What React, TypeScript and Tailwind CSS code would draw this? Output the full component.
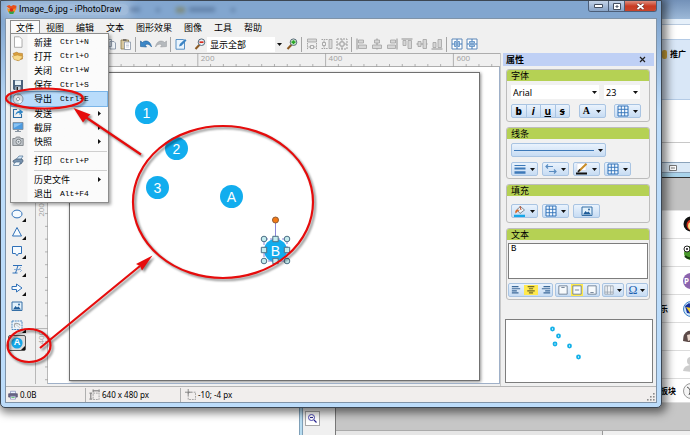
import React from "react";
import type { ReactNode } from "react";

/* ---------- small drawing helpers ---------- */

function Icon({ children, size = 12 }: { children: ReactNode; size?: number }) {
  return (
    <svg width={size} height={size} viewBox="0 0 12 12" fill="none" aria-hidden="true" className="shrink-0">
      {children}
    </svg>
  );
}

function Caret() {
  return (
    <svg width="5" height="3" viewBox="0 0 5 3" aria-hidden="true" className="pointer-events-none shrink-0">
      <path d="M0 0h5L2.500 3z" fill="#111" />
    </svg>
  );
}

const Logo = (
  <Icon size={11}>
    <path d="M.5 2.500 3.500 1l2 1.500L8 1l3.500 1L11 6 6.500 7z" fill="#e8501c" />
    <path d="M1 4.500 6 6l5-1.500L9.500 9h-7z" fill="#f7921e" />
    <path d="M3 8h6l-1 3H4z" fill="#35a045" />
    <circle cx="6" cy="6.500" r="2" fill="#d42a1a" />
  </Icon>
);

const icons = {
  newFile: <path d="M2.500.8h5l2.500 2.500v8h-7.500z" fill="#fff" stroke="#9a9a9a" strokeWidth=".8" />,
  open: (
    <>
      <path d="M1 3.500 5 2l1 1 4.500.5V9L5 10.500z" fill="#d99f3e" stroke="#a8701d" strokeWidth=".5" />
      <path d="M.5 6 5.500 5 11 6.500 7 10.800 2 9.500z" fill="#f7d98b" stroke="#b8842c" strokeWidth=".5" />
    </>
  ),
  save: (
    <>
      <path d="M1 1h10v10H2L1 10z" fill="#49617c" />
      <path d="M3 1.500h6V6H3z" fill="#e8f2f8" />
      <path d="M3.500 7.500h5V11h-5z" fill="#c8d4de" />
      <path d="M4.500 8h1.500v3H4.500z" fill="#222" />
    </>
  ),
  disc: (
    <>
      <circle cx="6" cy="6" r="5" fill="#d5dbe2" stroke="#76808c" strokeWidth=".8" />
      <path d="M6 6 2 3.500A5 5 0 0 1 5 1.500zM6 6l4 2.500A5 5 0 0 1 7 10.500z" fill="#f8fafc" />
      <circle cx="6" cy="6" r="1.600" fill="#fff" stroke="#76808c" strokeWidth=".7" />
    </>
  ),
  send: (
    <>
      <path d="M9.500 7v3.500h-8v-8H5" stroke="#2d6da3" strokeWidth="1.100" />
      <path d="M3.500 8.500c0-3 1.500-4.500 4-4.500V2l3.800 3-3.800 3V6c-2 0-3 .5-4 2.500z" fill="#2f87c8" />
    </>
  ),
  monitor: (
    <>
      <path d="M1 1.500h10v7H1z" fill="#4d9be0" stroke="#7c8a99" strokeWidth=".8" />
      <path d="M2 2.500h8L2 7z" fill="#8cc4f2" />
      <path d="M5 8.500h2V10h2v1H3v-1h2z" fill="#8a96a2" />
    </>
  ),
  camera: (
    <>
      <path d="M.8 3.500h2.500l1-1.500h3.500l1 1.500h2.400v7H.8z" fill="#bfc4c9" stroke="#73787d" strokeWidth=".8" />
      <circle cx="6.500" cy="6.800" r="2.500" fill="#eef1f3" stroke="#73787d" strokeWidth=".9" />
      <circle cx="6.500" cy="6.800" r="1" fill="#7d8890" />
    </>
  ),
  print: (
    <>
      <path d="M4 4.500 7 1h4L8.500 5z" fill="#d4e9fa" stroke="#4e7194" strokeWidth=".7" />
      <path d="M.8 6 4 4h6l1.200 2L9 9H3z" fill="#7892ae" stroke="#3f566e" strokeWidth=".7" />
      <path d="M2 8.500 4 7h4.500L7 10.500H1.500z" fill="#f2f7fb" stroke="#4e7194" strokeWidth=".7" />
    </>
  ),
  copy: <path d="M1.500 1.500h5v7h-5zM5 3.500h4L10.500 5v6H5z" fill="#eef3f8" stroke="#8793a5" strokeWidth=".9" />,
  paste: (
    <>
      <path d="M1 2h7.500v9H1z" fill="#d8c8a0" stroke="#8c7846" strokeWidth=".8" />
      <path d="M3 1h3.500v2H3z" fill="#77706a" />
      <path d="M4.500 4h6v7.500h-6z" fill="#fff" stroke="#8793a5" strokeWidth=".8" />
      <path d="M6 6h3M6 7.500h3M6 9h3" stroke="#a7b4c6" strokeWidth=".6" />
    </>
  ),
  undo: <path d="M.5 8.500V3l2 1.500C5 1.800 10.500 2.500 11.500 9 9.500 5.800 7 5.500 5 7l1.500 2z" fill="#3c87c7" stroke="#1f5d97" strokeWidth=".6" />,
  redo: <path d="M11.500 8.500V3l-2 1.500C7 1.800 1.500 2.500.5 9 2.500 5.800 5 5.500 7 7L5.500 9z" fill="#b5b9bd" stroke="#96999c" strokeWidth=".5" />,
  edit: (
    <>
      <path d="M1 1.500h7.500l1 1v8.700H1z" fill="#e9f4fd" stroke="#4a86bd" strokeWidth=".9" />
      <path d="m4 8.500.8-2.500L10 1l1.500 1.400L6.500 7.800z" fill="#3b84c4" />
    </>
  ),
  zoomOut: (
    <>
      <path d="M5.500 6.800 1.500 11" stroke="#8c5a23" strokeWidth="2" />
      <circle cx="7.500" cy="4.200" r="3.300" fill="#e8f1f7" stroke="#596b7a" />
      <path d="M5.500 4.200h4" stroke="#d92a1c" strokeWidth="1.700" />
    </>
  ),
  zoomIn: (
    <>
      <path d="M5.500 6.800 1.500 11" stroke="#8c5a23" strokeWidth="2" />
      <circle cx="7.500" cy="4.200" r="3.300" fill="#d9efd5" stroke="#596b7a" />
      <path d="M5.500 4.200h4M7.500 2.200v4" stroke="#25a526" strokeWidth="1.700" />
    </>
  ),
  sameWidth: (
    <>
      <path d="M1.500 1h9v3h-9z" fill="#dadada" stroke="#a2a2a2" strokeWidth=".8" />
      <path d="M1.500 5v6.500M10.500 5v6.500M2.500 9h1.500M8 9h1.500" stroke="#999" strokeWidth=".9" strokeDasharray="1.500 .8" />
      <path d="M4.500 7.500h3v3h-3z" stroke="#999" strokeWidth=".8" />
    </>
  ),
  sameHeight: (
    <>
      <path d="M8 1.500h3v9H8z" fill="#dadada" stroke="#a2a2a2" strokeWidth=".8" />
      <path d="M.5 1.500H7M.5 10.500H7M3 2.500V4M3 8v1.500" stroke="#999" strokeWidth=".9" strokeDasharray="1.500 .8" />
      <path d="M1.500 4.500h3v3h-3z" stroke="#999" strokeWidth=".8" />
    </>
  ),
  sameSize: (
    <>
      <path d="M1 1h10v10H1z" stroke="#999" strokeWidth="1" strokeDasharray="2 1" />
      <path d="M4 4h4v4H4zM6 1v3M6 8v3M1 6h3M8 6h3" stroke="#999" strokeWidth=".9" />
    </>
  ),
  alignL: (
    <>
      <path d="M1 .5v11" stroke="#8e8e8e" />
      <path d="M2.500 2h5v3h-5zM2.500 7h8v3.500h-8z" fill="#d6d6d6" stroke="#a2a2a2" strokeWidth=".8" />
    </>
  ),
  alignC: (
    <>
      <path d="M6 .5v11" stroke="#8e8e8e" />
      <path d="M3.500 2h5v3h-5zM1.500 7h9v3.500h-9z" fill="#d6d6d6" stroke="#a2a2a2" strokeWidth=".8" />
    </>
  ),
  alignR: (
    <>
      <path d="M11 .5v11" stroke="#8e8e8e" />
      <path d="M4.500 2h5v3h-5zM1.500 7h8v3.500h-8z" fill="#d6d6d6" stroke="#a2a2a2" strokeWidth=".8" />
    </>
  ),
  alignT: (
    <>
      <path d="M.5 1h11" stroke="#8e8e8e" />
      <path d="M2 2.500h3v5H2zM7 2.500h3.500v8H7z" fill="#d6d6d6" stroke="#a2a2a2" strokeWidth=".8" />
    </>
  ),
  alignM: (
    <>
      <path d="M.5 6h11" stroke="#8e8e8e" />
      <path d="M2 3.500h3v5H2zM7 1.500h3.500v9H7z" fill="#d6d6d6" stroke="#a2a2a2" strokeWidth=".8" />
    </>
  ),
  alignB: (
    <>
      <path d="M.5 11h11" stroke="#8e8e8e" />
      <path d="M2 4.500h3v5H2zM7 1.500h3.500v8H7z" fill="#d6d6d6" stroke="#a2a2a2" strokeWidth=".8" />
    </>
  ),
  centerH: (
    <>
      <path d="M1 1h10v10H1z" fill="#fff" stroke="#5c87b8" />
      <path d="M1 6h2.500M8.500 6H11M6 1v10" stroke="#3e78b8" />
      <path d="M3.500 3.500H5v5H3.500zM7 3.500h1.500v5H7z" fill="#d6e8f8" stroke="#3e78b8" strokeWidth=".7" />
    </>
  ),
  centerV: (
    <>
      <path d="M1 1h10v10H1z" fill="#fff" stroke="#5c87b8" />
      <path d="M6 1v2.500M6 8.500V11M1 6h10" stroke="#3e78b8" />
      <path d="M3.500 3.500h5V5h-5zM3.500 7h5v1.500h-5z" fill="#d6e8f8" stroke="#3e78b8" strokeWidth=".7" />
    </>
  ),
  ellipse: <ellipse cx="6" cy="6" rx="5" ry="3.900" fill="#f6fbff" stroke="#2f70b8" />,
  triangle: <path d="M6 1.500 10.500 10h-9z" fill="#f6fbff" stroke="#2f70b8" />,
  callout: <path d="M1.500 1.500h9v7h-3L6 10.800 4.500 8.500h-3z" fill="#f6fbff" stroke="#2f70b8" />,
  textLine: (
    <>
      <path d="M2 2.500h9M7 2.500 4.500 10M1.500 10h5" stroke="#2f70b8" />
      <path d="m10 4-3 3.500M3 6.500h7M9 9l2-2" stroke="#6e9ed0" strokeWidth=".7" />
    </>
  ),
  arrow: <path d="M1 4.500h4.500V2L11 6l-5.500 4V7.500H1z" fill="#f6fbff" stroke="#2f70b8" />,
  image: (
    <>
      <path d="M1 2h10v8.500H1z" fill="#e2f1fb" stroke="#356fa6" />
      <path d="m2 9.500 2.500-3.500L6 7.500l1.500-1L10 9.500z" fill="#1f5c98" />
      <circle cx="8" cy="4.500" r=".9" fill="#1f5c98" />
    </>
  ),
  freeform: (
    <>
      <path d="M1 2h10v8.500H1z" fill="#eef6fc" stroke="#4b86bd" strokeDasharray="2 .7" />
      <path d="M4 8.500C2.500 6 4 3.500 6 4.500s2.500-.5 3 2" stroke="#777" strokeWidth=".8" />
      <path d="m3 4 6 5" stroke="#aaa" strokeWidth=".6" />
    </>
  ),
  stamp: <circle cx="6" cy="6" r="5.600" fill="#16a7e8" />,
  grid: (
    <>
      <path d="M1 1h10v10H1z" fill="#f3f9ff" stroke="#2f70b8" strokeWidth="1" />
      <path d="M4.300 1v10M7.700 1v10M1 4.300h10M1 7.700h10" stroke="#2f70b8" strokeWidth=".9" />
    </>
  ),
  lines: (
    <>
      <path d="M.5 2.500h11" stroke="#3d79b8" />
      <path d="M.5 5.500h11" stroke="#3d79b8" strokeWidth="1.800" />
      <path d="M.5 9.500h11" stroke="#3d79b8" strokeWidth="2.600" />
    </>
  ),
  lineArrows: (
    <path d="M1 3.500h7M3 1.500l-2 2 2 2M4 8.500h7M9 6.500l2 2-2 2" stroke="#5a8cc0" strokeWidth="1.200" />
  ),
  pen: (
    <>
      <path d="M1 .5h9v7H1z" fill="#fff" stroke="#ccd" strokeWidth=".5" />
      <path d="M3 8 10.500.8" stroke="#c98c28" strokeWidth="2" />
      <path d="M2 9 4 6.500" stroke="#222" strokeWidth="1.500" />
      <path d="M0 10.500h11" stroke="#111" strokeWidth="2.200" />
    </>
  ),
  bucket: (
    <>
      <path d="M3 4.500 6.500 1.500l4 3.500-4.500 3.500z" fill="#f2f5f8" stroke="#62707e" strokeWidth=".8" />
      <path d="M3 4.500C1 5 1 7 1.500 8.500 3 7.500 3.500 6 6 5z" fill="#d8692a" />
      <path d="m6 1 1 4" stroke="#b7421d" strokeWidth=".9" />
      <path d="M0 10.800h11" stroke="#16a7e8" strokeWidth="2.200" />
    </>
  ),
  table: (
    <path d="M1 1h10v10H1zM4 1v10M8 1v10M1 8.500h10" stroke="#8e9aa8" strokeWidth=".9" fill="#f2f5f8" />
  ),
  boxTop: <path d="M1 1h10v10H1zM4 3h4" stroke="#63758a" strokeWidth="1" fill="#f7fafc" />,
  boxMid: <path d="M1 1h10v10H1zM3.500 6h5" stroke="#63758a" strokeWidth="1" fill="#f7fafc" />,
  boxBottom: <path d="M1 1h10v10H1zM4 9h4" stroke="#63758a" strokeWidth="1" fill="#f7fafc" />,
  textL: <path d="M1 2h8M1 4.500h10M1 7h6M1 9.500h8" stroke="#3c6a99" strokeWidth="1.400" />,
  textC: <path d="M2 2h8M3.500 4.500h5M1.500 7h9M3.500 9.500h5" stroke="#6f6a2c" strokeWidth="1.400" />,
  textR: <path d="M3 2h8M1 4.500h10M5 7h6M3 9.500h8" stroke="#3c6a99" strokeWidth="1.400" />,
};

type IconName = keyof typeof icons;

/* ---------- menu ---------- */

const menus = ["视图", "编辑", "文本", "图形效果", "图像", "工具", "帮助"];

type Entry = { label: string; keys?: string; icon?: IconName; sub?: boolean; hot?: boolean; rule?: boolean };

const fileMenu: Entry[] = [
  { label: "新建", keys: "Ctrl+N", icon: "newFile" },
  { label: "打开", keys: "Ctrl+O", icon: "open" },
  { label: "关闭", keys: "Ctrl+W" },
  { label: "保存", keys: "Ctrl+S", icon: "save" },
  { label: "导出", keys: "Ctrl+E", icon: "disc", hot: true },
  { label: "发送", icon: "send", sub: true },
  { label: "截屏", icon: "monitor", sub: true },
  { label: "快照", icon: "camera", sub: true },
  { label: "打印", keys: "Ctrl+P", icon: "print", rule: true },
  { label: "历史文件", sub: true, rule: true },
  { label: "退出", keys: "Alt+F4" },
];

function FileMenu() {
  return (
    <div
      role="menu"
      className="absolute top-[14px] left-0 z-20 flex h-[170px] w-[99px] flex-col border border-[#8c8c8c] bg-[#fbfbfb] bg-linear-to-r from-[#f1f1f1] from-[16px] to-[#fbfbfb] to-[17px] p-px shadow-[2px_2px_3px_rgba(0,0,0,0.35)]"
    >
      {fileMenu.map((e) => (
        <React.Fragment key={e.label}>
          {e.rule && <div className="my-[2px] ml-[22px] h-px shrink-0 bg-[#cfcfcf]" />}
          <button
            role="menuitem"
            className={
              e.hot
                ? "flex min-h-0 flex-1 items-center bg-[#b9dcfb] text-left outline outline-[#7ab5e8]"
                : "flex min-h-0 flex-1 items-center text-left"
            }
          >
            <span className="flex w-[22px] justify-start">
              {e.icon && <Icon>{icons[e.icon]}</Icon>}
            </span>
            <span className={e.sub ? "whitespace-nowrap" : "w-[26px] whitespace-nowrap"}>{e.label}</span>
            {e.keys && (
              <span className="font-['Liberation_Mono','DejaVu_Sans_Mono',monospace] text-[8px]">{e.keys}</span>
            )}
            {e.sub && (
              <svg width="3" height="5" viewBox="0 0 3 5" aria-hidden="true" className="mr-[6px] ml-auto">
                <path d="M0 0v5l3-2.500z" fill="#111" />
              </svg>
            )}
          </button>
        </React.Fragment>
      ))}
    </div>
  );
}

/* ---------- toolbar ---------- */

function Tool({ name, label }: { name: IconName; label: string }) {
  return (
    <button aria-label={label} className="flex h-[17px] w-[15px] shrink-0 items-center justify-center">
      <Icon>{icons[name]}</Icon>
    </button>
  );
}

function Divider() {
  return <div className="mx-[2px] h-[15px] w-px shrink-0 bg-[#a5a5a5]" />;
}

function Toolbar() {
  return (
    <div className="flex h-[18px] shrink-0 items-center pl-[97px]">
      <Tool name="copy" label="复制" />
      <Tool name="paste" label="粘贴" />
      <Divider />
      <Tool name="undo" label="撤销" />
      <Tool name="redo" label="重做" />
      <Divider />
      <Tool name="edit" label="编辑" />
      <div className="w-1" />
      <Tool name="zoomOut" label="缩小" />
      <div className="flex w-[77px] items-center">
        <select aria-label="缩放" className="h-[15px] flex-1 appearance-none bg-white pl-[3px]">
          <option>显示全部</option>
        </select>
        <span className="flex w-[9px] justify-center">
          <Caret />
        </span>
      </div>
      <Tool name="zoomIn" label="放大" />
      <Divider />
      <Tool name="sameWidth" label="等宽" />
      <Tool name="sameHeight" label="等高" />
      <Tool name="sameSize" label="等大" />
      <Divider />
      <Tool name="alignL" label="左对齐" />
      <Tool name="alignC" label="水平居中" />
      <Tool name="alignR" label="右对齐" />
      <Tool name="alignT" label="顶对齐" />
      <Tool name="alignM" label="垂直居中" />
      <Tool name="alignB" label="底对齐" />
      <Divider />
      <Tool name="centerH" label="画布水平居中" />
      <Tool name="centerV" label="画布垂直居中" />
    </div>
  );
}

/* ---------- rulers and canvas ---------- */

const STEP = 12.78;
const ticks = Array.from({ length: 34 }, (_, i) => i);

function TopRuler() {
  return (
    <svg height="14" aria-hidden="true" className="w-full shrink-0 bg-[#f0f0f0]">
      <path d="M0 .5h600M0 13.500h600" stroke="#adadad" />
      {ticks.map((i) => {
        const x = 35 + i * STEP;
        return <path key={i} d={`M${x} ${i % 10 === 0 ? 0 : 11}V14`} stroke="#a0a0a0" strokeWidth=".8" />;
      })}
      {[200, 400, 600].map((n) => (
        <text key={n} x={38 + (n / 20) * STEP} y="8" fontSize="8" fill="#a0a0a0" className="font-['Open_Sans',sans-serif]">
          {n}
        </text>
      ))}
    </svg>
  );
}

function SideRuler() {
  return (
    <svg width="13" aria-hidden="true" className="h-full shrink-0 bg-[#f0f0f0]">
      <path d="M.5 0v600M12.500 0v600" stroke="#b8b8b8" />
      {ticks.map((i) => {
        const y = 6 + i * STEP;
        return <path key={i} d={`M${i % 10 === 0 ? 0 : 10} ${y}H13`} stroke="#a0a0a0" strokeWidth=".8" />;
      })}
      {[200, 400].map((n) => (
        <text
          key={n}
          transform={`translate(9 ${22 + (n / 20) * STEP}) rotate(-90)`}
          fontSize="8"
          fill="#a0a0a0"
          className="font-['Open_Sans',sans-serif]"
        >
          {n}
        </text>
      ))}
    </svg>
  );
}

const markers = [
  { t: "1", at: "left-[65px] top-[28px]" },
  { t: "2", at: "left-[95px] top-[64px]" },
  { t: "3", at: "left-[76px] top-[103px]" },
  { t: "A", at: "left-[150px] top-[112px]" },
  { t: "B", at: "left-[194px] top-[166px]" },
];

function Handles() {
  const round = [[4, 31], [27, 31], [4, 53], [27, 53]];
  const square = [[15.5, 31], [4, 42], [27, 42], [15.5, 53]];
  return (
    <svg width="32" height="60" aria-hidden="true" className="absolute top-[135px] left-[190px]">
      <path d="M15.500 11v20" stroke="#8a86d8" />
      <path d="M4 31h23v22H4z" fill="none" stroke="#8a86d8" strokeDasharray="4 2" />
      {round.map(([x, y]) => (
        <circle key={`${x}-${y}`} cx={x} cy={y} r="2.800" fill="#c5ecee" stroke="#4c6f86" />
      ))}
      {square.map(([x, y]) => (
        <path key={`${x}-${y}`} d={`M${x - 2.7} ${y - 2.7}h5.400v5.400h-5.400z`} fill="#c5ecee" stroke="#4c6f86" />
      ))}
      <circle cx="15.500" cy="12" r="3" fill="#f47a16" stroke="#8f5a33" />
    </svg>
  );
}

function Canvas() {
  return (
    <div className="min-w-0 flex-1 overflow-hidden border-r border-b border-[#9fb0c8] bg-white pt-[5px] pl-[21px]">
      <div className="relative h-[309px] w-[411px] border border-[#707070] bg-white shadow-[1px_1px_3px_rgba(0,0,0,0.45)]">
        {markers.map((m) => (
          <div
            key={m.t}
            className={`absolute flex size-[23px] items-center justify-center rounded-full bg-[#12adee] font-['Liberation_Sans',sans-serif] text-[14px] text-white ${m.at}`}
          >
            {m.t}
          </div>
        ))}
        <Handles />
      </div>
    </div>
  );
}

/* ---------- shape palette ---------- */

const shapes: { name: IconName; label: string }[] = [
  { name: "ellipse", label: "椭圆" },
  { name: "triangle", label: "三角形" },
  { name: "callout", label: "标注" },
  { name: "textLine", label: "文字" },
  { name: "arrow", label: "箭头" },
  { name: "image", label: "图片" },
  { name: "freeform", label: "自由形状" },
  { name: "stamp", label: "计数" },
];

function Palette() {
  return (
    <div className="flex w-[29px] shrink-0 flex-col justify-end pb-[35px] pl-[2px]">
      <div className="flex h-[145px] flex-col justify-between">
        {shapes.map((s) => (
          <button
            key={s.name}
            aria-label={s.label}
            className={
              s.name === "stamp"
                ? "relative flex h-[16px] w-[18px] items-center justify-center rounded-xs border border-[#555] bg-[#dcdcdc]"
                : "relative flex h-[16px] w-[18px] items-center justify-center"
            }
          >
            <Icon>{icons[s.name]}</Icon>
            {s.name === "stamp" && (
              <span className="absolute inset-0 flex items-center justify-center font-['Liberation_Sans',sans-serif] text-[9px] font-bold text-white">
                A
              </span>
            )}
            {s.name !== "image" && (
              <svg width="4" height="4" aria-hidden="true" className="absolute right-0 bottom-0">
                <path d="M4 0v4H0z" fill="#111" />
              </svg>
            )}
          </button>
        ))}
      </div>
    </div>
  );
}

/* ---------- property panel ---------- */

function Group({ title, children }: { title: string; children: ReactNode }) {
  return (
    <section className="overflow-hidden rounded-[3px] border border-[#bdbdbd] bg-[#f1f1f1]">
      <h2 className="flex h-[11px] items-center bg-[#b5d154] pl-1">{title}</h2>
      {children}
    </section>
  );
}

const chip =
  "flex h-[14px] items-center justify-around rounded-[2px] border border-[#a9c4e2] bg-linear-to-b from-[#eaf3fd] to-[#c7dcf3]";

function Split({ name, label }: { name: IconName; label: string }) {
  return (
    <button aria-label={label} className={`${chip} w-[27px]`}>
      <Icon size={12}>{icons[name]}</Icon>
      <Caret />
    </button>
  );
}

function Picker({ label, value, wide }: { label: string; value: string; wide?: boolean }) {
  return (
    <div className={wide ? "flex w-[88px] items-center bg-white pr-[2px]" : "flex w-[36px] items-center bg-white pr-[2px]"}>
      <select aria-label={label} className="h-[14px] min-w-0 flex-1 appearance-none bg-white pl-[2px]">
        <option>{value}</option>
      </select>
      <Caret />
    </div>
  );
}

function Properties() {
  return (
    <aside className="flex w-[156px] shrink-0 flex-col border-l border-[#c9c9c9] px-[2px] pb-[3px]">
      <div className="flex h-[13px] shrink-0 items-center justify-between bg-[#bfd0f5] pr-[8px] pl-[3px]">
        <span className="font-bold">属性</span>
        <button aria-label="关闭面板">
          <svg width="7" height="7" viewBox="0 0 7 7" aria-hidden="true">
            <path d="m1 1 5 5M6 1 1 6" stroke="#222" strokeWidth="1.200" />
          </svg>
        </button>
      </div>
      <div className="flex flex-col gap-[5px] pt-[3px] pr-[4px] pl-[3px]">
        <Group title="字体">
          <div className="flex gap-[5px] px-1 pt-[4px]">
            <Picker label="字体" value="Arial" wide />
            <Picker label="字号" value="23" />
          </div>
          <div className="flex justify-between pt-[5px] pr-[8px] pb-[3px] pl-[4px] font-['Open_Sans',sans-serif] text-[10px]">
            <div className={`${chip} w-[59px] divide-x divide-[#a9c4e2]`}>
              <button aria-label="粗体" className="flex h-full flex-1 items-center justify-center font-extrabold">b</button>
              <button aria-label="斜体" className="flex h-full flex-1 items-center justify-center font-bold italic">i</button>
              <button aria-label="下划线" className="flex h-full flex-1 items-center justify-center font-bold underline">u</button>
              <button aria-label="删除线" className="flex h-full flex-1 items-center justify-center font-bold line-through">s</button>
            </div>
            <button
              aria-label="文字颜色"
              className={`${chip} w-[27px] font-['Liberation_Serif',serif] font-bold`}
            >
              A
              <Caret />
            </button>
            <Split name="grid" label="文字图案" />
          </div>
        </Group>
        <Group title="线条">
          <div className="px-1 pt-[4px]">
            <button aria-label="线型" className={`${chip} w-[95px]`}>
              <span className="h-px w-[80px] bg-[#3d79b8]" />
              <Caret />
            </button>
          </div>
          <div className="flex gap-1 px-1 pt-[5px] pb-[2px]">
            <Split name="lines" label="线宽" />
            <Split name="lineArrows" label="箭头样式" />
            <Split name="pen" label="线条颜色" />
            <Split name="grid" label="线条图案" />
          </div>
        </Group>
        <Group title="填充">
          <div className="flex gap-1 px-1 pt-[8px] pb-[4px]">
            <Split name="bucket" label="填充颜色" />
            <Split name="grid" label="填充图案" />
            <button aria-label="填充图片" className={`${chip} w-[27px]`}>
              <Icon size={12}>{icons.image}</Icon>
            </button>
          </div>
        </Group>
        <Group title="文本">
          <div className="flex flex-col px-px pt-[3px] pb-[2px]">
            <textarea
              aria-label="文本"
              defaultValue="B"
              className="h-[36px] w-full resize-none border border-[#7d7d7d] bg-white px-[2px] font-['Liberation_Mono',monospace] text-[9px] leading-[11px]"
            />
            <div className="flex justify-between pt-[4px]">
              <div className={`${chip} w-[45px]`}>
                <button aria-label="左"><Icon size={10}>{icons.textL}</Icon></button>
                <button aria-label="中" className="bg-[#ffe94d] px-[2px]"><Icon size={10}>{icons.textC}</Icon></button>
                <button aria-label="右"><Icon size={10}>{icons.textR}</Icon></button>
              </div>
              <div className={`${chip} w-[45px]`}>
                <button aria-label="上"><Icon size={10}>{icons.boxTop}</Icon></button>
                <button aria-label="居中" className="bg-[#ffe94d] p-px"><Icon size={10}>{icons.boxMid}</Icon></button>
                <button aria-label="下"><Icon size={10}>{icons.boxBottom}</Icon></button>
              </div>
              <button aria-label="边距" className={`${chip} w-[22px]`}>
                <Icon size={10}>{icons.table}</Icon>
                <Caret />
              </button>
              <button aria-label="符号" className={`${chip} w-[22px] font-['Liberation_Serif',serif] text-[12px] text-[#1c5fae]`}>
                Ω
                <Caret />
              </button>
            </div>
          </div>
        </Group>
      </div>
      <div className="mt-auto mr-px ml-[2px] h-[64px] border border-[#7d7d7d] bg-white">
        <svg width="146" height="62" aria-hidden="true">
          {[[46.5, 9], [52.5, 16], [49, 24], [63.5, 26], [72.5, 37]].map(([x, y]) => (
            <g key={x}>
              <circle cx={x} cy={y} r="2.400" fill="#14b0e8" />
              <path d={`M${x} ${y - 0.8}v1.600`} stroke="#d8f4ff" strokeWidth=".9" />
            </g>
          ))}
        </svg>
      </div>
    </aside>
  );
}

/* ---------- status bar ---------- */

function StatusBar() {
  return (
    <footer className="flex h-[16px] shrink-0 items-center border-t border-[#b5b5b5] bg-[#f1eeed] pl-[2px] font-['Noto_Sans',sans-serif] text-[8px]">
      <div className="flex w-[77px] items-center gap-[2px]">
        <Icon size={10}>
          <path d="M3 1.500h6v3H3z" fill="#eaf2ff" stroke="#7c86b4" strokeWidth=".8" />
          <path d="M.8 4.500h10.400v4H.8z" fill="#6c6788" stroke="#4c4766" strokeWidth=".8" />
          <path d="M3 7.500h6v3.500H3z" fill="#fff" stroke="#7c86b4" strokeWidth=".8" />
          <path d="M4 9h4" stroke="#4bb864" />
        </Icon>
        0.0B
      </div>
      <div className="h-[14px] w-px bg-[#b0b0b0]" />
      <div className="flex w-[94px] items-center gap-[2px] pl-[3px]">
        <Icon size={11}>
          <path d="M4.500 4.500h6.500v7H4.500z" stroke="#888" strokeWidth=".8" strokeDasharray="2 1" />
          <path d="M4.500.5v3M11 .5v3M5 2h5.500M.5 4.500h3M.5 11h3M2 5v5.500" stroke="#555" strokeWidth=".9" />
        </Icon>
        640 x 480 px
      </div>
      <div className="h-[14px] w-px bg-[#b0b0b0]" />
      <div className="flex flex-1 items-center gap-[2px] pl-[4px]">
        <Icon size={11}>
          <path d="M3.500 3.500h8v8h-8z" stroke="#888" strokeWidth=".8" strokeDasharray="2 1" />
          <path d="M0 3.500h7M3.500 0v7" stroke="#777" strokeWidth=".9" />
        </Icon>
        -10; -4 px
      </div>
      <svg width="9" height="9" aria-hidden="true" className="self-end">
        {[[6, 0], [3, 3], [6, 3], [0, 6], [3, 6], [6, 6]].map(([x, y]) => (
          <rect key={`${x}${y}`} x={x} y={y} width="1.600" height="1.600" fill="#8c8c8c" />
        ))}
      </svg>
    </footer>
  );
}

/* ---------- title bar ---------- */

function TitleBar() {
  return (
    <header className="relative flex h-[17px] shrink-0 items-center pl-[5px]">
      <div className="flex items-center gap-[2px] rounded-full bg-white/25 pr-2 shadow-[0_0_8px_4px_rgba(255,255,255,0.25)]">
        {Logo}
        <h1 className="font-['Roboto','Noto_Sans',sans-serif] text-[9px] whitespace-nowrap">Image_6.jpg - iPhotoDraw</h1>
      </div>
      <div className="ml-[1px] flex items-center gap-[16px] opacity-60 blur-[2px]">
        <span className="h-[5px] w-[10px] bg-[#4e6a90]" />
        <span className="size-[4px] bg-[#4e6a90]" />
        <span className="h-[6px] w-[9px] bg-[#7b7a4c]" />
        <span className="-ml-[12px] h-[5px] w-[26px] bg-[#4e6a90]" />
        <span className="size-[4px] bg-[#4e6a90]" />
      </div>
      <div className="mr-1 ml-auto flex h-[11px] self-start overflow-hidden rounded-b-[3px] border border-t-0 border-[#4c5e78]">
        <button aria-label="最小化" className="flex w-[20px] items-center justify-center border-r border-[#4c5e78] bg-linear-to-b from-[#c3d3e8] to-[#88a3c6]">
          <svg width="9" height="4" aria-hidden="true"><path d="M.5.5h8v3h-8z" fill="#fff" stroke="#444f60" /></svg>
        </button>
        <button aria-label="最大化" className="flex w-[16px] items-center justify-center border-r border-[#4c5e78] bg-linear-to-b from-[#c3d3e8] to-[#88a3c6]">
          <svg width="8" height="7" aria-hidden="true"><path d="M.5.5h7v6h-7zM3 3h2v1H3z" fill="#fff" stroke="#444f60" /></svg>
        </button>
        <button aria-label="关闭" className="flex w-[31px] items-center justify-center bg-linear-to-b from-[#dc8b7c] via-[#c93a22] to-[#c8452c]">
          <svg width="9" height="7" aria-hidden="true">
            <path d="m1.500 1 6 5M7.500 1l-6 5" stroke="#5c2c28" strokeWidth="3" />
            <path d="m1.500 1 6 5M7.500 1l-6 5" stroke="#fff" strokeWidth="1.800" />
          </svg>
        </button>
      </div>
    </header>
  );
}

/* ---------- red call-outs drawn over the window ---------- */

function Annotations() {
  return (
    <svg aria-hidden="true" className="pointer-events-none absolute inset-0 z-30 h-full w-full drop-shadow-[2px_2px_1px_rgba(0,0,0,0.45)]">
      <g fill="none" stroke="#e60c0c" strokeWidth="2.200">
        <ellipse cx="222" cy="201" rx="90" ry="76" />
        <ellipse cx="43.500" cy="97.500" rx="38.500" ry="10" />
        <ellipse cx="28" cy="344.500" rx="21.500" ry="16.500" />
        <path d="M140 153.500 83 115M39 347l100-82" />
      </g>
      <path d="m72.500 107 17 6.500-4 3.500-3.500 4.500zM151.500 254.500 135 263l4 2 2 4.500z" fill="#e60c0c" />
    </svg>
  );
}

/* ---------- windows behind ---------- */

const avatars: ReactNode[] = [
  <g key="a"><circle cx="9" cy="8" r="7.500" fill="#111" /><circle cx="10" cy="9" r="5.500" fill="#d8321e" /><circle cx="10" cy="10" r="4" fill="#f6e28c" /></g>,
  <g key="b"><circle cx="9" cy="9" r="7" fill="#4a9a2b" /><circle cx="5" cy="5" r="3" fill="#fff" stroke="#222" /><circle cx="5" cy="5" r="1" fill="#111" /><path d="M3 12q4 4 9 1" stroke="#173d0e" strokeWidth="2" fill="none" /></g>,
  <g key="c"><circle cx="9" cy="9" r="8" fill="#8b63ad" /></g>,
  <g key="d"><circle cx="9" cy="9" r="7.500" fill="#cfe7fb" stroke="#3b7fc6" /><path d="m3 6 4-3 5 4-1 7-6-1z" fill="#16309c" /><path d="m4 7 5 1-1 5z" fill="#f2cf2e" /></g>,
  <g key="e"><path d="M1 13q0-8 5-10 3-1 5 1v10H6z" fill="#5c4a48" /><path d="m5 7 4-1v6l-3 1z" fill="#e8d6cc" /></g>,
  <g key="f"><circle cx="9" cy="5" r="4" fill="#cdcdcd" /><path d="M1 15q1-6 9-6v7z" fill="#cdcdcd" /></g>,
  <g key="g"><circle cx="9" cy="9" r="7.500" fill="#f5f5f5" stroke="#999" /><path d="M5 5q5 2 2 8" stroke="#555" fill="none" /></g>,
];
const avatarNotes = ["", "", "", "乐", "", "", "板块"];

function Backdrop() {
  return (
    <>
      <div className="absolute inset-x-0 bottom-0 flex h-[40px]">
        <div className="w-[299px] bg-white" />
        <div className="w-[4px] border-x border-[#7fa0b8] bg-[#b8dcf0]" />
        <div className="w-[32px] bg-[#f0f0f0] pt-[16px] pl-[2px]">
          <button aria-label="缩放工具" className="flex size-[15px] items-center justify-center border border-[#a8a8a8] bg-white">
            <svg width="9" height="9" viewBox="0 0 9 9" aria-hidden="true">
              <circle cx="3.500" cy="3.500" r="3" fill="#fff" stroke="#4a46b4" />
              <path d="M2 3.500h3M6 6l2.500 2.500" stroke="#2a2690" strokeWidth="1.200" />
            </svg>
          </button>
        </div>
        <div className="flex flex-1 flex-col border-l border-[#777] bg-[#c6c6c6]">
          <div className="mt-auto flex h-[5px] border-t border-[#aaa] bg-[#f0f0f0]">
            <div className="w-[267px] border-r border-[#999] bg-[#e6e6e6]" />
          </div>
        </div>
      </div>
      <div className="absolute top-0 right-0 flex w-[34px] flex-col text-[8px] font-bold">
        <div className="h-[19px] bg-linear-to-b from-[#7391b8] to-[#9db9d8]" />
        <div className="h-[6px] border-b border-[#b9cbe0] bg-[#e6f0fa]" />
        <div className="h-[14px] bg-white" />
        <div className="flex h-[61px] items-start gap-[3px] border-y border-[#b4cbe6] bg-[#d9e7f7] pt-[8px] pl-[6px]">
          <span className="mt-[2px] h-[9px] w-[5px] rounded-xs bg-[#cfa53a]" />
          <span className="leading-[12px] whitespace-nowrap">推广</span>
        </div>
        <div className="h-[43px] border-b border-[#c8c8c8] bg-white" />
        <div className="h-[19px] bg-white" />
        <div className="flex h-[11px] items-center justify-center gap-2 border-y border-[#8ba3ba] bg-[#dbe9f6]">
          <svg width="8" height="6" aria-hidden="true"><path d="M.5.5h7v5h-7zM2 3h4" fill="#fff" stroke="#777" /></svg>
        </div>
        <div className="h-[5px] border-b border-[#333] bg-[#a9d3ea]" />
        <div className="h-[33px] border-b border-[#e4e4e4] bg-[#c2c2c2]" />
        {avatars.map((a, i) => (
          <div key={i} className="flex h-[28px] items-center justify-between overflow-hidden border-b border-[#dcdcdc] bg-white pl-[2px] last:h-[24px]">
            <span className="pl-[2px] whitespace-nowrap">{avatarNotes[i]}</span>
            <span className="relative flex w-[8px] shrink-0 items-center">
              <svg width="18" height="18" aria-hidden="true" className="shrink-0">{a}</svg>
              {i === 2 && <span className="absolute left-[2px] text-[8px] text-white">P</span>}
            </span>
          </div>
        ))}
      </div>
    </>
  );
}

export default function App() {
  return (
    <div className="relative h-screen w-full overflow-hidden bg-[#c6c6c6] font-['Noto_Sans','Noto_Sans_CJK_SC',sans-serif] text-[9px] leading-none text-black">
      <Backdrop />
      <main className="absolute top-0 right-[28px] bottom-[27px] left-0 flex flex-col rounded-b-[5px] border border-[#3c4652] bg-[#b4d2f0] bg-linear-to-b from-[#82a6cf] from-[18px] to-[#bcdcfa] to-[110px] shadow-[2px_2px_9px_3px_rgba(0,0,0,0.5)]">
        <TitleBar />
        <div className="mx-1 mb-1 flex min-h-0 flex-1 flex-col border border-[#7f93a8] bg-[#f0f0f0]">
          <nav className="relative flex h-[16px] shrink-0 items-stretch pl-1">
            <div className="relative">
              <button className="mt-px h-[14px] border border-b-0 border-[#8c8c8c] bg-[#fafafa] px-[5px]">文件</button>
              <FileMenu />
            </div>
            {menus.map((m) => (
              <button key={m} className="px-[6px]">{m}</button>
            ))}
          </nav>
          <Toolbar />
          <div className="flex min-h-0 flex-1">
            <Palette />
            <div className="flex min-w-0 flex-1 flex-col pb-[2px]">
              <TopRuler />
              <div className="flex min-h-0 flex-1">
                <SideRuler />
                <Canvas />
              </div>
            </div>
            <Properties />
          </div>
          <StatusBar />
        </div>
        <Annotations />
      </main>
    </div>
  );
}
